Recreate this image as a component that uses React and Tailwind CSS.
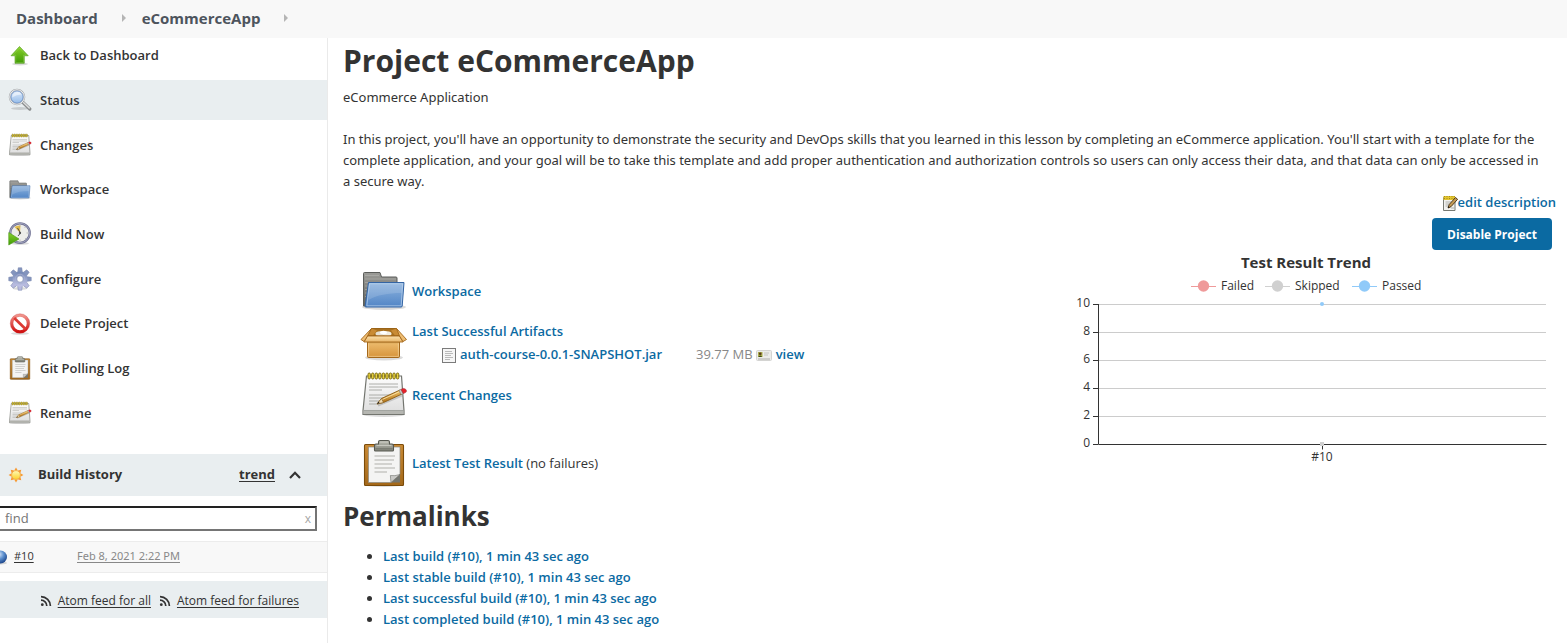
import React from "react";

const GRADIENTS = [
  ["gFolder", "#8fb4de", "#5185c6"],
  ["gFolderBack", "#9c9c98", "#5f615e"],
  ["gPaper", "#fdfdfd", "#dcdcdc"],
  ["gBoard", "#c98a35", "#a3681a"],
  ["gClip", "#b9bbb0", "#84867c"],
  ["gArrow", "#8ad22c", "#3f9a06"],
  ["gLens", "#e3eefb", "#8fb8e8"],
  ["gGear", "#7186b4", "#c2c4e6"],
  ["gRed", "#f0948c", "#d01010"],
  ["gBox", "#f6cd84", "#d6933a"],
  ["gBoxFlap", "#fbe0ac", "#e8b567"],
  ["gPencil", "#f3c56c", "#a8680c"],
  ["gSun", "#fffbb8", "#fcd22a"],
];

function Gradients() {
  return (
    <svg className="absolute size-0" aria-hidden="true">
      <defs>
        {GRADIENTS.map(([id, from, to]) => (
          <linearGradient key={id} id={id} x1="0" y1="0" x2="0" y2="1">
            <stop offset="0" stopColor={from} />
            <stop offset="1" stopColor={to} />
          </linearGradient>
        ))}
        <radialGradient id="gBall" cx="0.4" cy="0.3" r="0.7">
          <stop offset="0" stopColor="#d5e4f7" />
          <stop offset="0.5" stopColor="#5c8fce" />
          <stop offset="1" stopColor="#1c468c" />
        </radialGradient>
      </defs>
    </svg>
  );
}

function Icon({ className = "size-6", children, box = 48 }) {
  return (
    <svg className={`shrink-0 ${className}`} viewBox={`0 0 ${box} ${box}`} aria-hidden="true">
      {children}
    </svg>
  );
}

const Shadow = ({ y = 42, rx = 21, ry = 3 }) => (
  <ellipse cx="24" cy={y} rx={rx} ry={ry} fill="#000" opacity="0.14" />
);

function FolderIcon({ className }) {
  return (
    <Icon className={className}>
      <Shadow y={40} rx={22} />
      <path d="M3.5 39V6.5q0-1 1-1H20l1.500 4.500H36q1 0 1 1V38Z" fill="url(#gFolderBack)" stroke="#5b5d5a" />
      <path d="M5 8.500h14M5 12h31M5 15.500h4M5 19h3M5 22.500h3M5 26h2M5 29.500h2" stroke="#bdbdb9" strokeWidth="0.8" opacity="0.6" />
      <path d="M8.500 15.500H44L42.200 39q-.2 1-1 1H5.800q-.8 0-.7-1Z" fill="url(#gFolder)" stroke="#3465a4" />
      <path d="M9.500 16.700H42.700L41.200 38.800H6.800Z" fill="none" stroke="#c6daf0" strokeWidth="0.9" opacity="0.7" />
      <path d="M9.500 17H42.500l-.8 9C28 26 17 28 8.500 33Z" fill="#fff" opacity="0.14" />
    </Icon>
  );
}

function Pencil() {
  return (
    <g>
      <path d="M17 33l4.500-5.500L40 19l2 4L23.500 31.500Z" fill="url(#gPencil)" stroke="#8a5a12" strokeWidth="0.9" />
      <path d="M17 33l4.500-5.500 2 4Z" fill="#f0dab0" stroke="#7d5a20" strokeWidth="0.6" />
      <path d="M17 33l1.400-2.200 1.300 1.300Z" fill="#222" />
      <path d="M22.500 28.400L40.300 20.300" stroke="#fbe3a8" strokeWidth="0.9" />
      <path d="M39 19.400l2-1 2.300 4.200-2.200 1Z" fill="#c9cac6" stroke="#77786f" strokeWidth="0.6" />
      <path d="M41 18.400l2.200-1q2.900 0 3.400 2.700 0 1.300-3.200 2.500Z" fill="#e8202a" stroke="#a3343a" strokeWidth="0.6" />
    </g>
  );
}

function NotepadIcon({ className }) {
  const rings = [0, 1, 2, 3, 4, 5, 6, 7, 8];
  return (
    <Icon className={className}>
      <Shadow y={43.500} rx={21} ry={2.500} />
      <path d="M6.500 5H41.500L44 39.500V43.500H3V39.500Z" fill="url(#gPaper)" stroke="#73756f" strokeWidth="1.200" />
      <path d="M3.600 39.800H43.400V43H3.600Z" fill="#b5b6b1" />
      <path d="M4 39.500H43.200" stroke="#8d8f89" strokeWidth="0.7" />
      <path d="M9 13h29M9 16h29M9 19h13M9 24h23M9 27h15M9 30h10M9 33h8" stroke="#a5a6a2" strokeWidth="0.9" />
      {rings.map((i) => (
        <rect key={i} x={8 + i * 3.550} y="2" width="2.400" height="6" rx="1.200" fill="#e8d23c" stroke="#77660d" strokeWidth="0.9" />
      ))}
      <path d="M18 34.500L42 24.500" stroke="#000" strokeWidth="2" opacity="0.15" />
      <Pencil />
    </Icon>
  );
}

function ClipboardIcon({ className }) {
  return (
    <Icon className={className}>
      <Shadow y={46} rx={20} ry={1.900} />
      <rect x="4.500" y="5.500" width="39" height="41" rx="1" fill="url(#gBoard)" stroke="#7c4c0a" strokeWidth="1.100" />
      <path d="M8.500 8H40V35.500L31 43.500H8.500Z" fill="#f4f4f3" stroke="#8b8b84" strokeWidth="0.7" />
      <path d="M40 35.500V43.500H31Z" fill="#73756f" />
      <path d="M31 43.500q-.5-4-.6-7 4 .8 9.600-1Z" fill="#c9c9c6" stroke="#6c6d68" strokeWidth="0.6" />
      <path d="M14.500 17H35M14.500 21H34M14.500 25H32M14.500 29H35M14.500 33H27" stroke="#c6c6c3" strokeWidth="1.500" />
      <path d="M18.500 5V3q0-1.500 1.500-1.500h8q1.500 0 1.500 1.500v2h2.500q1.500 0 1.500 1.500V11q0 1-1 1h-17q-1 0-1-1V6.500Q14.500 5 16 5Z" fill="url(#gClip)" stroke="#565850" strokeWidth="1.100" />
      <path d="M15.500 9.800H32.500" stroke="#6a6c63" strokeWidth="0.8" />
      <path d="M20 3.200h8M16.500 6.500h15" stroke="#c9cac2" strokeWidth="0.9" />
    </Icon>
  );
}

function PackageIcon({ className }) {
  return (
    <Icon className={className}>
      <Shadow y={38.500} rx={19} ry={3} />
      <path d="M11.500 9.500H36.500L41 16.500 38 17H9.500L7 16.500Z" fill="#a8701f" stroke="#9a6418" />
      <path d="M11.500 9.500L8 16 13 16.500 17 11.500Z" fill="#c98b35" />
      <path d="M36.500 9.500L40 16 35 16.500 31 11.500Z" fill="#c98b35" />
      <ellipse cx="20" cy="14.800" rx="4.500" ry="2.500" fill="#e6e1d5" />
      <ellipse cx="27" cy="14.800" rx="4.500" ry="2.500" fill="#f1ede3" />
      <ellipse cx="23.500" cy="13.500" rx="3.500" ry="1.700" fill="#fff" />
      <path d="M7.500 17H39.500V37.500q0 1-1 1H8.500q-1 0-1-1Z" fill="url(#gBox)" stroke="#a4681b" />
      <path d="M8.600 24V37.400H38.400V24" fill="none" stroke="#fbe2b0" strokeWidth="0.9" opacity="0.6" />
      <path d="M7.500 17H39.500L43 23H4Z" fill="url(#gBoxFlap)" stroke="#a4681b" strokeWidth="0.9" />
      <path d="M8 23.700H39" stroke="#9a6418" opacity="0.4" />
      <path d="M11.500 9.500L7.500 17 4 22.500 1 20.500Z" fill="#eebd72" stroke="#a4681b" strokeWidth="0.9" />
      <path d="M36.500 9.500L39.500 17 43 22.500 46.500 20.500Z" fill="#eebd72" stroke="#a4681b" strokeWidth="0.9" />
    </Icon>
  );
}

function UpArrowIcon() {
  return (
    <Icon>
      <Shadow y={40} rx={16} />
      <path d="M23 5L40.500 23.500H32.500V38.500H14V23.500H6Z" fill="url(#gArrow)" stroke="#5aa01f" strokeWidth="1.300" />
      <path d="M23 7.800L37 22.300H31V37H15.500V22.300H9.500Z" fill="none" stroke="#c3ef87" strokeWidth="1" opacity="0.5" />
    </Icon>
  );
}

function SearchIcon() {
  return (
    <Icon>
      <Shadow y={41} rx={18} />
      <path d="M30 29L43.500 42" stroke="#8b8d8e" strokeWidth="6.500" strokeLinecap="round" />
      <path d="M31 29L42.500 40" stroke="#dcdddd" strokeWidth="3" strokeLinecap="round" />
      <circle cx="18" cy="18" r="14.500" fill="url(#gLens)" stroke="#a3a6a9" strokeWidth="4" />
      <circle cx="18" cy="18" r="14.500" fill="none" stroke="#eceef0" strokeWidth="2" />
      <circle cx="18" cy="18" r="12" fill="none" stroke="#6d93c8" strokeWidth="1.500" />
      <path d="M8 19q1-10 11-11 7 0 8 5-10 0-19 6Z" fill="#fff" opacity="0.5" />
    </Icon>
  );
}

function ClockIcon() {
  return (
    <Icon>
      <Shadow y={43} rx={18} />
      <circle cx="24" cy="22" r="19.500" fill="#eeeeea" stroke="#6f7192" strokeWidth="4.500" />
      <circle cx="24" cy="22" r="19.500" fill="none" stroke="#a3a5bf" strokeWidth="1.800" />
      <path d="M24 22L13 10Q18 6 25 7Z" fill="#e0bb4c" />
      <path d="M19 12l6 10-5 6" fill="none" stroke="#444" strokeWidth="1.800" />
      <path d="M24 6v3M24 35v3M37 22h3M33 12l2-2M34 32l2 2" stroke="#aaa" strokeWidth="1.400" />
      <circle cx="24" cy="22" r="2.300" fill="#555" />
      <path d="M1.500 21L22 34 1.500 46Z" fill="url(#gArrow)" stroke="#4f9a1c" strokeWidth="1.300" />
    </Icon>
  );
}

function GearIcon() {
  const teeth = [0, 45, 90, 135, 180, 225, 270, 315];
  return (
    <Icon>
      <Shadow y={43} rx={15} />
      <g stroke="#7482aa" strokeWidth="1">
        {teeth.map((a) => (
          <path key={a} d="M19 12L20.500 1.500H27.500L29 12Z" fill={a > 90 && a < 270 ? "#b7b9dd" : "#8495be"} transform={`rotate(${a} 24 24)`} />
        ))}
      </g>
      <circle cx="24" cy="24" r="15" fill="url(#gGear)" />
      <circle cx="24" cy="24" r="9.500" fill="none" stroke="#a9b1d2" strokeWidth="1.500" />
      <circle cx="24" cy="24" r="6.500" fill="#fff" stroke="#7683ab" strokeWidth="1.200" />
    </Icon>
  );
}

function ForbiddenIcon() {
  return (
    <Icon>
      <Shadow y={43} rx={18} ry={2.500} />
      <circle cx="24" cy="23" r="16.500" fill="#fff" stroke="url(#gRed)" strokeWidth="6" />
      <path d="M12.500 12L35.500 34.500" stroke="#dd3a34" strokeWidth="5.500" />
      <circle cx="24" cy="23" r="19.500" fill="none" stroke="#c52a2a" strokeWidth="1" opacity="0.6" />
    </Icon>
  );
}

function SunIcon() {
  const rays = [0, 45, 90, 135, 180, 225, 270, 315];
  return (
    <Icon className="size-4" box={16}>
      {rays.map((a) => (
        <path key={a} d="M6.200 3.600L8 .6l1.800 3Z" fill="#f79a33" transform={`rotate(${a} 8 8)`} />
      ))}
      <circle cx="8" cy="8" r="4.400" fill="url(#gSun)" stroke="#f3b04a" strokeWidth="1" />
    </Icon>
  );
}

function DocumentIcon() {
  return (
    <Icon className="size-4" box={16}>
      <rect x="1.500" y="1.500" width="13" height="14" fill="#f6f6f6" stroke="#7b7b7b" />
      <path d="M4 4.500h7M4 6.500h8M4 8.500h6M4 10.500h8M4 12.500h5" stroke="#b3b3b3" strokeWidth="0.9" />
    </Icon>
  );
}

function FingerprintIcon() {
  return (
    <Icon className="size-4" box={16}>
      <rect x="0.500" y="3.500" width="15" height="10" rx="1" fill="#ececea" stroke="#d4d4d2" />
      <rect x="2" y="5" width="4.500" height="5" fill="#a9ad4e" />
      <circle cx="4.200" cy="6.800" r="1.300" fill="#5c3a1a" />
      <path d="M2.200 10q2-3 4 0Z" fill="#3c4a14" />
      <path d="M8 6h5M8 8h4" stroke="#c2c2c0" strokeWidth="0.9" />
      <path d="M2 12h12" stroke="#a7a7a5" strokeWidth="0.9" />
    </Icon>
  );
}

function EditIcon() {
  return (
    <Icon className="size-4" box={16}>
      <path d="M1.500 2.500H13V15.500H1.500Z" fill="#f1f1ef" stroke="#777972" />
      <path d="M3.500 7h6M3.500 9h4M3.500 11h3M9 13h3" stroke="#a9aaa6" strokeWidth="0.9" />
      <path d="M1.500 1h11.500v4H1.500Z" fill="#e3c531" />
      <path d="M2.500 1v4M5 1v4M7.500 1v4M10 1v4M12.300 1v4" stroke="#8d760f" strokeWidth="0.7" strokeDasharray="1 1" />
      <path d="M6 13l1.200-3.500L13.500 2.500 15.600 4.300 9 11.700Z" fill="#c59a55" stroke="#3f2d12" strokeWidth="0.9" />
      <path d="M6 13l.5-1.600 1.100.9Z" fill="#111" />
    </Icon>
  );
}

function FeedIcon() {
  return (
    <svg className="size-3 shrink-0" viewBox="0 0 12 12" fill="none" stroke="#333" aria-hidden="true">
      <circle cx="2.300" cy="9.700" r="1.400" fill="#333" stroke="none" />
      <path d="M1 5.200a5.800 5.800 0 0 1 5.800 5.800M1 1.600a9.400 9.400 0 0 1 9.400 9.400" strokeWidth="1.700" />
    </svg>
  );
}

const TASKS = [
  ["Back to Dashboard", UpArrowIcon],
  ["Status", SearchIcon],
  ["Changes", NotepadIcon],
  ["Workspace", FolderIcon],
  ["Build Now", ClockIcon],
  ["Configure", GearIcon],
  ["Delete Project", ForbiddenIcon],
  ["Git Polling Log", ClipboardIcon],
  ["Rename", NotepadIcon],
];

function Separator() {
  return (
    <svg className="h-2 w-1 shrink-0" viewBox="0 0 4 8" aria-hidden="true">
      <path d="M0 0L4 4 0 8Z" fill="#b5b5b5" />
    </svg>
  );
}

function Breadcrumbs() {
  return (
    <header className="flex h-[38px] items-center bg-[#f8f8f8] px-4 pb-0.5 text-[15px] font-bold text-[#4d545d]">
      <a href="#dashboard" className="mr-6">Dashboard</a>
      <Separator />
      <a href="#project" className="mr-6 ml-4">eCommerceApp</a>
      <Separator />
    </header>
  );
}

function BuildHistory() {
  return (
    <section className="mt-[19px]">
      <div className="flex h-[42px] items-center bg-[#e9eef0] pr-6 pb-px pl-2">
        <SunIcon />
        <h2 className="ml-3.5 grow text-[13px] font-bold">Build History</h2>
        <a href="#trend" className="text-[13px] font-bold underline underline-offset-2">trend</a>
        <button type="button" aria-label="Collapse" className="ml-3 flex size-4 items-center justify-center">
          <svg className="h-2 w-3" viewBox="0 0 12 8" fill="none" stroke="#333" strokeWidth="2.200" aria-hidden="true">
            <path d="M1 7L6 1.800 11 7" />
          </svg>
        </button>
      </div>
      <div className="mt-2.5 mr-2.5 flex h-[25px] items-center border-2 border-l-0 border-[#757575] border-t-[#222] pr-1 pl-[5px]">
        <input aria-label="find" placeholder="find" className="min-w-0 grow text-[13px] outline-none placeholder:text-[#757575]" />
        <button type="button" aria-label="Clear" className="text-[12px] text-[#a5a5a5]">x</button>
      </div>
      <div className="mt-2.5 flex h-8 items-center overflow-hidden border-y border-[#ececec] bg-[#f8f8f8] pb-1 text-[11px]">
        <svg className="mt-1 h-4 w-2 shrink-0" viewBox="8 0 8 16" aria-hidden="true">
          <ellipse cx="9" cy="14" rx="6" ry="1.500" fill="#000" opacity="0.15" />
          <circle cx="8.500" cy="8" r="6.500" fill="url(#gBall)" />
        </svg>
        <a href="#10" className="ml-1.5 w-[63px] underline underline-offset-2">#10</a>
        <a href="#10" className="font-['Noto_Sans',sans-serif] text-[#888] underline underline-offset-2">Feb 8, 2021 2:22 PM</a>
      </div>
      <div className="mt-2 flex h-[37px] items-center justify-end bg-[#e9eef0] pt-0.5 pr-7 text-[12px]">
        <a href="#all" className="flex items-center gap-1.5">
          <FeedIcon />
          <span className="underline underline-offset-2">Atom feed for all</span>
        </a>
        <a href="#failures" className="ml-2 flex items-center gap-1.5">
          <FeedIcon />
          <span className="underline underline-offset-2">Atom feed for failures</span>
        </a>
      </div>
    </section>
  );
}

function Sidebar() {
  return (
    <aside className="w-[328px] shrink-0 border-r border-[#eaeaea]">
      <nav className="-mt-[5px] grid h-[402px] auto-rows-fr items-center">
        {TASKS.map(([label, TaskIcon]) => (
          <a
            key={label}
            href="#task"
            className={`flex h-10 items-center gap-2 pt-px pl-2 text-[13px] font-semibold ${label === "Status" ? "bg-[#e9eef0]" : ""}`}
          >
            <TaskIcon />
            {label}
          </a>
        ))}
      </nav>
      <BuildHistory />
    </aside>
  );
}

const LEGEND = [
  ["Failed", "#ef9a9a", 124, 154],
  ["Skipped", "#d0d0d0", 198, 228],
  ["Passed", "#90caf9", 285, 315],
];

function TrendChart() {
  const ticks = [10, 8, 6, 4, 2, 0];
  return (
    <svg className="h-[220px] w-[489px]" viewBox="0 0 489 220" fill="#333" role="img" aria-label="Test Result Trend">
      <text x="239" y="18" textAnchor="middle" fontSize="15" fontWeight="700">Test Result Trend</text>
      {LEGEND.map(([label, color, x, textX]) => (
        <g key={label}>
          <path d={`M${x} 36.500h25`} stroke={color} strokeWidth="1" />
          <circle cx={x + 12.500} cy="36" r="5.700" fill={color} />
          <text x={textX} y="40" fontSize="12">{label}</text>
        </g>
      ))}
      {ticks.map((value, i) => (
        <g key={value}>
          {value > 0 && <path d={`M31 ${54.500 + i * 28}H479`} stroke="#ccc" />}
          <path d={`M26 ${54.500 + i * 28}h5`} stroke="#333" />
          <text x="23" y={57 + i * 28} textAnchor="end" fontSize="12">{value}</text>
        </g>
      ))}
      <path d="M31.500 54V194.500H479.500M255.500 194.500v5" stroke="#333" fill="none" />
      <circle cx="255" cy="54" r="2" fill="#90caf9" />
      <rect x="253" y="192" width="4" height="4" fill="#d0d0d0" />
      <text x="255" y="211" textAnchor="middle" fontSize="12">#10</text>
    </svg>
  );
}

const link = "font-semibold text-[#0b6aa2]";

const PERMALINKS = ["Last build", "Last stable build", "Last successful build", "Last completed build"];

function ProjectLinks() {
  return (
    <div className="pt-[75px] pl-[17px]">
      <div className="flex h-[52px] items-start gap-1">
        <FolderIcon className="size-12" />
        <a href="#workspace" className={`leading-[48px] ${link}`}>Workspace</a>
      </div>
      <div className="flex h-[52px] items-start gap-1">
        <PackageIcon className="size-12" />
        <div className="pt-0.5">
          <a href="#artifacts" className={link}>Last Successful Artifacts</a>
          <div className="mt-0.5 flex items-center pl-[29px]">
            <DocumentIcon />
            <a href="#jar" className={`ml-[3px] w-[236px] ${link}`}>auth-course-0.0.1-SNAPSHOT.jar</a>
            <span className="mr-[3px] text-[#888]">39.77 MB</span>
            <FingerprintIcon />
            <a href="#view" className={`ml-1 ${link}`}>view</a>
          </div>
        </div>
      </div>
      <div className="flex h-[68px] items-start gap-1">
        <NotepadIcon className="size-12" />
        <a href="#changes" className={`leading-[48px] ${link}`}>Recent Changes</a>
      </div>
      <div className="flex h-12 items-start gap-1">
        <ClipboardIcon className="size-12" />
        <p className="leading-[48px]">
          <a href="#tests" className={link}>Latest Test Result</a> (no failures)
        </p>
      </div>
    </div>
  );
}

export default function App() {
  return (
    <div className="flex min-h-screen flex-col bg-white font-['Open_Sans','Noto_Sans',sans-serif] text-[13px] leading-[21px] text-[#333]">
      <Gradients />
      <Breadcrumbs />
      <div className="flex grow items-stretch">
        <Sidebar />
        <main className="min-w-0 grow pr-[11px] pl-[15px]">
          <h1 className="text-[30px] leading-[46px] font-bold">Project eCommerceApp</h1>
          <div className="mt-[3px] pr-3 font-['Noto_Sans',sans-serif]">
            <p>eCommerce Application</p>
            <p className="mt-[21px]">
              In this project, you'll have an opportunity to demonstrate the security and DevOps skills that you learned
              in this lesson by completing an eCommerce application. You'll start with a template for the complete
              application, and your goal will be to take this template and add proper authentication and authorization
              controls so users can only access their data, and that data can only be accessed in a secure way.
            </p>
          </div>
          <div className="flex justify-between">
            <div>
              <ProjectLinks />
              <h2 className="mt-2 text-[26px] leading-[42px] font-bold">Permalinks</h2>
              <ul className="mt-[9px] list-disc pl-10">
                {PERMALINKS.map((name) => (
                  <li key={name}>
                    <a href="#10" className={link}>{name} (#10), 1 min 43 sec ago</a>
                  </li>
                ))}
              </ul>
            </div>
            <div className="flex flex-col items-end">
              <a href="#edit" className={`flex items-center ${link}`}>
                <EditIcon />
                edit description
              </a>
              <button type="button" className="mt-[5px] mr-1 h-8 w-[120px] rounded bg-[#0b6aa2] text-[12px] font-bold text-white">
                Disable Project
              </button>
              <TrendChart />
            </div>
          </div>
        </main>
      </div>
    </div>
  );
}
